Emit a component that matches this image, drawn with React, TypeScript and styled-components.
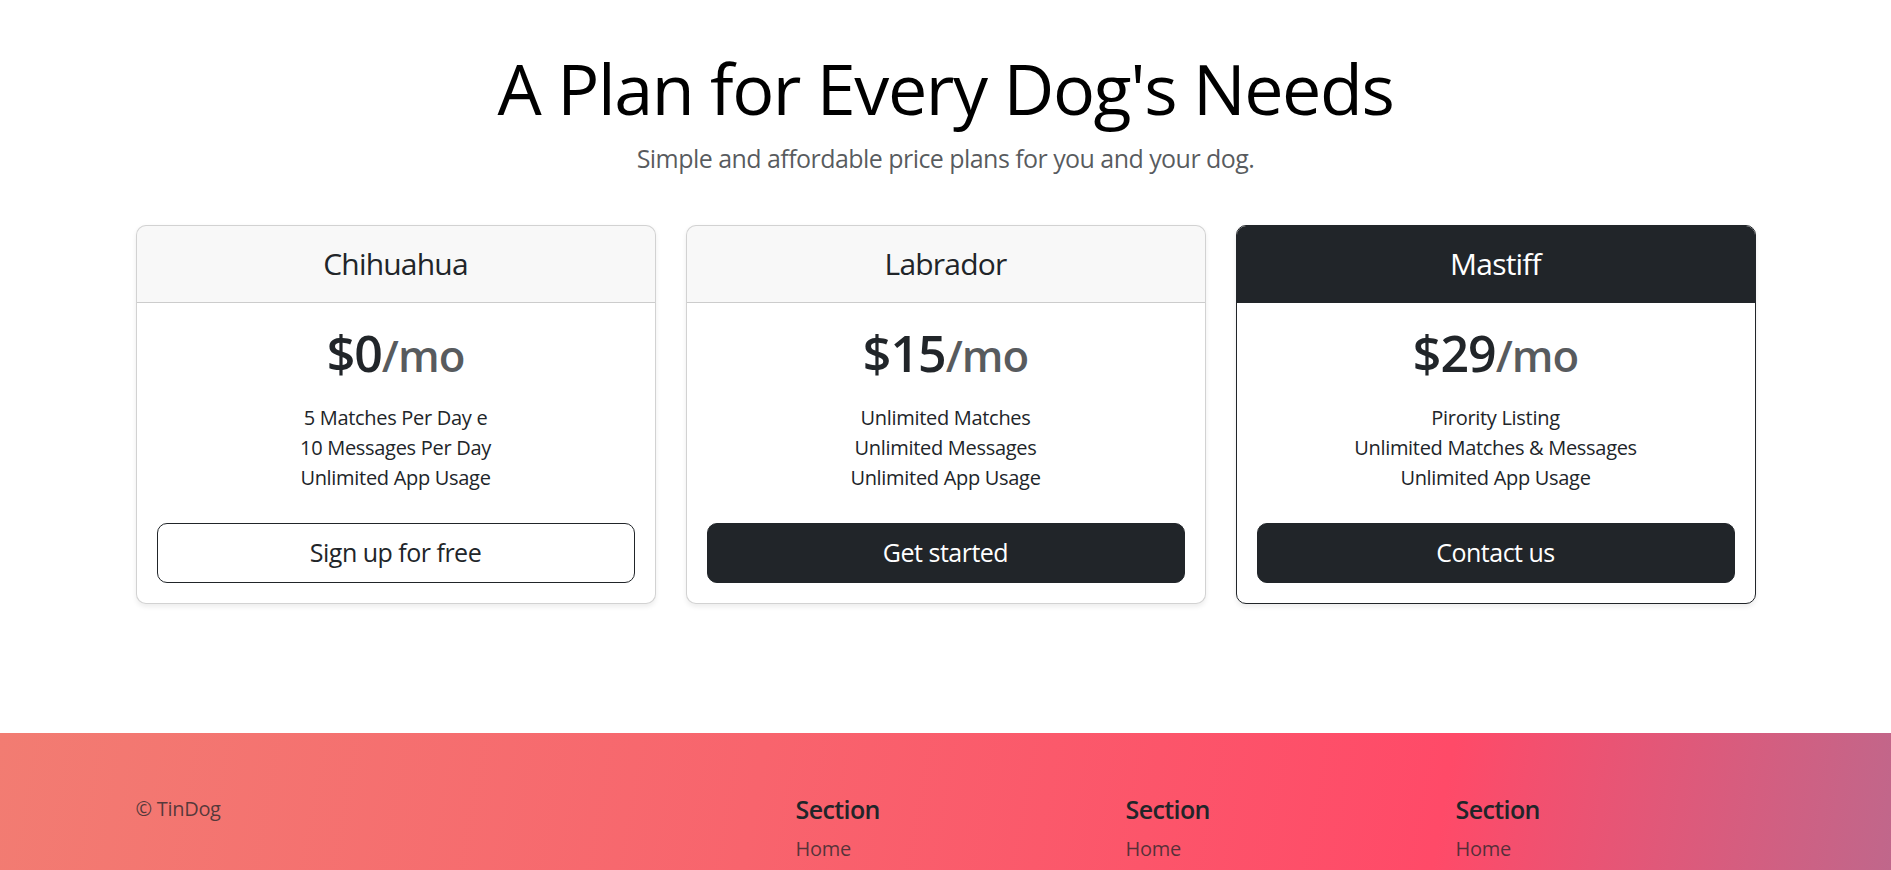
import React from 'react';
import styled, { createGlobalStyle } from 'styled-components';

const GlobalStyle = createGlobalStyle`
  html, body {
    margin: 0;
    padding: 0;
    background: #fff;
  }
  body {
    font-family: "Open Sans", "Noto Sans", "Liberation Sans", sans-serif;
    color: #212529;
    font-size: 20px;
    line-height: 1.5;
  }
  * {
    box-sizing: border-box;
  }
`;

const Page = styled.div`
  width: 100%;
  overflow: hidden;
`;

const PricingSection = styled.section`
  width: 1650px;
  margin: 0 auto;
  padding: 46px 15px 129px;
`;

const PricingHeader = styled.header`
  text-align: center;
  margin-bottom: 47px;
`;

const Title = styled.h1`
  margin: 0 0 10px;
  font-size: 70px;
  font-weight: 400;
  line-height: 1.2;
  letter-spacing: -1.4px;
  color: #000;
`;

const Subtitle = styled.p`
  margin: 0;
  font-size: 25px;
  line-height: 1.5;
  letter-spacing: -0.55px;
  color: rgba(33, 37, 41, 0.75);
`;

const CardGrid = styled.div`
  display: grid;
  grid-template-columns: repeat(3, 1fr);
  gap: 30px;
  text-align: center;
`;

const Card = styled.div<{ featured?: boolean }>`
  display: flex;
  flex-direction: column;
  background: #fff;
  border: 1px solid ${p => (p.featured ? '#212529' : 'rgba(0, 0, 0, 0.175)')};
  border-radius: 10px;
  box-shadow: 0 2.5px 5px rgba(0, 0, 0, 0.075);
  overflow: hidden;
`;

const CardHeader = styled.div<{ featured?: boolean }>`
  padding: 20px 20px;
  background: ${p => (p.featured ? '#212529' : 'rgba(33, 37, 41, 0.03)')};
  border-bottom: 1px solid ${p => (p.featured ? '#212529' : 'rgba(0, 0, 0, 0.175)')};
`;

const PlanName = styled.h4<{ featured?: boolean }>`
  margin: 0;
  font-size: 30px;
  font-weight: 400;
  line-height: 1.2;
  letter-spacing: -0.8px;
  color: ${p => (p.featured ? '#fff' : '#212529')};
`;

const CardBody = styled.div`
  padding: 20px;
`;

const Price = styled.h1`
  margin: 0 0 20px;
  font-size: 50px;
  font-weight: 600;
  line-height: 1.2;
  letter-spacing: -1px;
  color: #212529;
`;

const Per = styled.small`
  font-size: 0.875em;
  font-weight: 600;
  color: rgba(33, 37, 41, 0.75);
`;

const Features = styled.ul`
  list-style: none;
  margin: 0 0 30px;
  padding: 0;
`;

const Feature = styled.li`
  font-size: 20px;
  line-height: 30px;
  letter-spacing: -0.3px;
`;

const PlanButton = styled.button<{ solid?: boolean }>`
  display: block;
  width: 100%;
  height: 60px;
  padding: 0 20px;
  font-family: inherit;
  font-size: 25px;
  line-height: 1.5;
  letter-spacing: -0.5px;
  border-radius: 10px;
  border: 1px solid #212529;
  background: ${p => (p.solid ? '#212529' : 'transparent')};
  color: ${p => (p.solid ? '#fff' : '#212529')};
  cursor: pointer;
`;

const FooterBand = styled.div`
  background: linear-gradient(100deg, #f27c72 0%, #f8646d 40%, #ff4a68 76%, #c0678b 100%);
`;

const Footer = styled.footer`
  width: 1650px;
  margin: 0 auto;
  padding: 61px 0 6px;
  display: grid;
  grid-template-columns: repeat(5, 1fr);
`;

const FooterCol = styled.div`
  padding: 0 15px;
`;

const Copyright = styled.p`
  margin: 0;
  font-size: 20px;
  line-height: 30px;
  letter-spacing: -0.3px;
  color: rgba(33, 37, 41, 0.75);
`;

const ColTitle = styled.h5`
  margin: 0 0 10px;
  font-size: 25px;
  font-weight: 600;
  line-height: 1.2;
  letter-spacing: -0.6px;
  color: #212529;
`;

const LinkList = styled.ul`
  list-style: none;
  margin: 0;
  padding: 0;
`;

const LinkItem = styled.li`
  font-size: 20px;
  line-height: 30px;
  letter-spacing: -0.3px;

  a {
    color: rgba(33, 37, 41, 0.75);
    text-decoration: none;
  }
`;

const plans = [
  {
    name: 'Chihuahua',
    price: '$0',
    features: ['5 Matches Per Day e', '10 Messages Per Day', 'Unlimited App Usage'],
    cta: 'Sign up for free',
    solid: false,
    featured: false,
  },
  {
    name: 'Labrador',
    price: '$15',
    features: ['Unlimited Matches', 'Unlimited Messages', 'Unlimited App Usage'],
    cta: 'Get started',
    solid: true,
    featured: false,
  },
  {
    name: 'Mastiff',
    price: '$29',
    features: ['Pirority Listing', 'Unlimited Matches & Messages', 'Unlimited App Usage'],
    cta: 'Contact us',
    solid: true,
    featured: true,
  },
];

const App: React.FC = () => {
  return (
    <Page>
      <GlobalStyle />

      {/* Pricing */}
      <PricingSection>
        <PricingHeader>
          <Title>A Plan for Every Dog's Needs</Title>
          <Subtitle>Simple and affordable price plans for you and your dog.</Subtitle>
        </PricingHeader>

        <CardGrid>
          {plans.map(plan => (
            <Card key={plan.name} featured={plan.featured}>
              <CardHeader featured={plan.featured}>
                <PlanName featured={plan.featured}>{plan.name}</PlanName>
              </CardHeader>
              <CardBody>
                <Price>
                  {plan.price}
                  <Per>/mo</Per>
                </Price>
                <Features>
                  {plan.features.map(f => (
                    <Feature key={f}>{f}</Feature>
                  ))}
                </Features>
                <PlanButton type="button" solid={plan.solid}>
                  {plan.cta}
                </PlanButton>
              </CardBody>
            </Card>
          ))}
        </CardGrid>
      </PricingSection>

      {/* Footer */}
      <FooterBand>
        <Footer>
          <FooterCol>
            <Copyright>© TinDog</Copyright>
          </FooterCol>
          <FooterCol />
          {[0, 1, 2].map(i => (
            <FooterCol key={i}>
              <ColTitle>Section</ColTitle>
              <LinkList>
                <LinkItem>
                  <a href="#">Home</a>
                </LinkItem>
              </LinkList>
            </FooterCol>
          ))}
        </Footer>
      </FooterBand>
    </Page>
  );
};

export default App;
